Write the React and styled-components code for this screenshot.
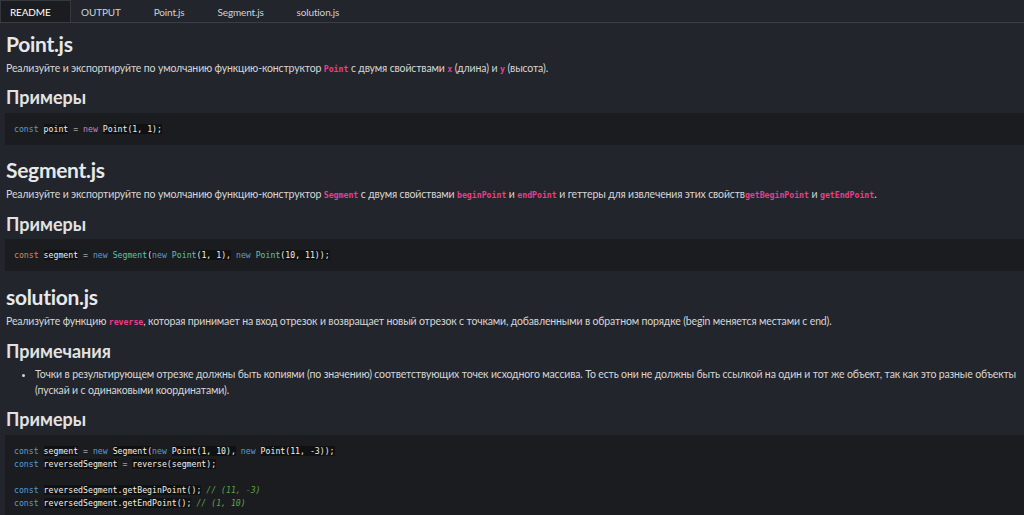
import styled, { createGlobalStyle } from "styled-components"

const Global = createGlobalStyle`
  html, body {
    margin: 0;
    padding: 0;
    background: #22252c;
  }
  body {
    font-family: Lato, "Open Sans", sans-serif;
    color: #d6d6d6;
    overflow: hidden;
  }
`

const Page = styled.div`
  width: 1024px;
  height: 515px;
  background: #22252c;
  overflow: hidden;
`

const TabBar = styled.div`
  display: flex;
  align-items: stretch;
  height: 22px;
  border-bottom: 1px solid #3a3d44;
`

const Tab = styled.div`
  display: flex;
  align-items: center;
  font-size: 10px;
  letter-spacing: -0.15px;
  padding: ${({ active }) => (active ? "0 19px 0 9px" : "0 15.5px")};
  color: ${({ active }) => (active ? "#ffffff" : "#cfd2d6")};
  background: ${({ active }) => (active ? "#1b1c1f" : "transparent")};
  border: 1px solid ${({ active }) => (active ? "#34373d" : "transparent")};
  border-bottom: none;
  margin-right: ${({ active }) => (active ? "-6px" : "0")};
`

const Content = styled.div`
  padding: 0 0 0 6px;
`

const H1 = styled.h1`
  font-size: 21px;
  font-weight: 700;
  letter-spacing: -0.3px;
  line-height: 30px;
  color: #e8e8e8;
  margin: ${({ top }) => top}px 0 0;
`

const H2 = styled.h2`
  font-size: 18px;
  font-weight: 700;
  line-height: 26px;
  color: #e2e2e2;
  margin: ${({ top }) => top}px 0 0;
`

const P = styled.p`
  font-size: 10.5px;
  letter-spacing: -0.15px;
  line-height: 18px;
  margin: 0;
`

const Code = styled.code`
  font-family: "DejaVu Sans Mono", "Liberation Mono", monospace;
  font-size: 8.2px;
  font-weight: 700;
  letter-spacing: 0;
  color: #e83e8c;
`

const Pre = styled.pre`
  margin: ${({ top }) => top}px 0 0 -1px;
  padding: ${({ pad }) => pad || "9.5px"} 9px 9.5px;
  background: #1b1c1f;
  font-family: "DejaVu Sans Mono", "Liberation Mono", monospace;
  font-size: 8.2px;
  line-height: 13px;
  color: #e4e4e4;
  white-space: pre;
`

const colors = {
  kw: "#569cd6",
  kwo: "#d9884a",
  nw: "#c586c0",
  ty: "#4ec9b0",
  op: "#9aa0a6",
  cm: "#5ea34a",
}

const Tok = styled.span`
  color: ${({ k }) => (k ? colors[k] : "#f0efea")};
  background: ${({ k }) => (k ? "transparent" : "#101113")};
  font-style: ${({ k }) => (k === "cm" ? "italic" : "normal")};
`

const List = styled.ul`
  margin: 2px 0 0;
  padding: 0 8px 0 29px;
  font-size: 10.5px;
  letter-spacing: -0.15px;
  line-height: 16px;
  li::marker {
    font-size: 10px;
  }
`

const App = () => {
  return (
    <Page>
      <Global />
      <TabBar>
        <Tab active>README</Tab>
        <Tab>OUTPUT</Tab>
        <Tab>Point.js</Tab>
        <Tab>Segment.js</Tab>
        <Tab>solution.js</Tab>
      </TabBar>
      <Content>
        <H1 top={6}>Point.js</H1>
        <P>
          Реализуйте и экспортируйте по умолчанию функцию-конструктор <Code>Point</Code> с двумя свойствами{" "}
          <Code>x</Code> (длина) и <Code>y</Code> (высота).
        </P>
        <H2 top={6}>Примеры</H2>
        <Pre top={3}>
          <Tok k="kw">const</Tok> <Tok>point</Tok> <Tok k="op">=</Tok> <Tok k="nw">new</Tok> <Tok>Point(1, 1);</Tok>
        </Pre>

        <H1 top={10}>Segment.js</H1>
        <P>
          Реализуйте и экспортируйте по умолчанию функцию-конструктор <Code>Segment</Code> с двумя свойствами{" "}
          <Code>beginPoint</Code> и <Code>endPoint</Code> и геттеры для извлечения этих свойств<Code>getBeginPoint</Code> и{" "}
          <Code>getEndPoint</Code>.
        </P>
        <H2 top={7}>Примеры</H2>
        <Pre top={2}>
          <Tok k="kwo">const</Tok> <Tok>segment</Tok> <Tok k="op">=</Tok> <Tok k="kw">new</Tok> <Tok k="ty">Segment</Tok>
          <Tok>(</Tok><Tok k="kw">new</Tok> <Tok k="ty">Point</Tok><Tok>(1, 1),</Tok> <Tok k="kw">new</Tok>{" "}
          <Tok k="ty">Point</Tok><Tok>(10, 11));</Tok>
        </Pre>

        <H1 top={11}>solution.js</H1>
        <P>
          Реализуйте функцию <Code>reverse</Code>, которая принимает на вход отрезок и возвращает новый отрезок с точками,
          добавленными в обратном порядке (begin меняется местами с end).
        </P>
        <H2 top={7}>Примечания</H2>
        <List>
          <li>
            Точки в результирующем отрезке должны быть копиями (по значению) соответствующих точек исходного массива. То
            есть они не должны быть ссылкой на один и тот же объект, так как это разные объекты (пускай и с одинаковыми
            координатами).
          </li>
        </List>
        <H2 top={8}>Примеры</H2>
        <Pre top={3} pad="10px">
          <Tok k="kw">const</Tok> <Tok>segment</Tok> <Tok k="op">=</Tok> <Tok k="kw">new</Tok> <Tok>Segment(</Tok>
          <Tok k="kw">new</Tok> <Tok>Point(1, 10),</Tok> <Tok k="kw">new</Tok> <Tok>Point(11, -3));</Tok>
          {"\n"}
          <Tok k="kw">const</Tok> <Tok>reversedSegment</Tok> <Tok k="op">=</Tok> <Tok>reverse(segment);</Tok>
          {"\n\n"}
          <Tok k="kw">const</Tok> <Tok>reversedSegment.getBeginPoint();</Tok> <Tok k="cm">// (11, -3)</Tok>
          {"\n"}
          <Tok k="kw">const</Tok> <Tok>reversedSegment.getEndPoint();</Tok> <Tok k="cm">// (1, 10)</Tok>
        </Pre>
      </Content>
    </Page>
  )
}

export default App
